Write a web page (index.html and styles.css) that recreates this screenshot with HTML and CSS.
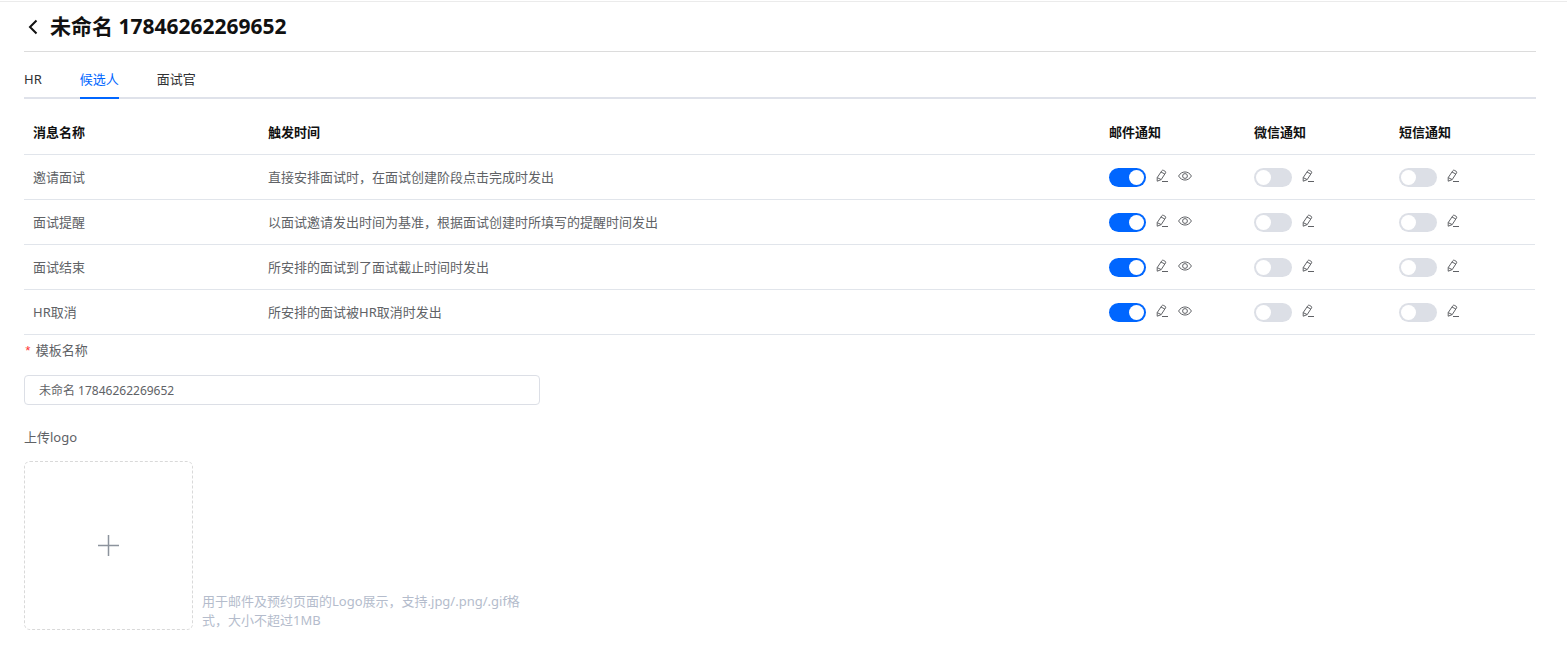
FILE: index.html
```html
<!DOCTYPE html>
<html lang="zh-CN">
<head>
    <meta charset="UTF-8">
    <meta name="viewport" content="width=device-width, initial-scale=1.0">
    <title>消息模板</title>
    <link rel="stylesheet" href="styles.css">
</head>
<body>

<svg class="sprite" aria-hidden="true">
    <symbol id="icon-edit" viewBox="0 0 14 14">
        <path d="M6.8 1.8Q7.4.9 8.3 1.3L10.3 2.4Q11.1 2.9 10.6 3.8L6.2 10.6 2.2 12.2 2.2 8.6z M9.8 5 6 3 M2.2 8.6 6.2 10.6 M7 12.5H13"/>
    </symbol>
    <symbol id="icon-view" viewBox="0 0 14 14">
        <path d="M.6 7C3.6 1.6 10.4 1.6 13.4 7 10.4 12.4 3.6 12.4.6 7z"/>
        <circle cx="7" cy="7" r="2.4"/>
    </symbol>
</svg>

<div class="page">
    <header class="page-header">
        <button type="button" class="back" aria-label="返回">
            <svg viewBox="0 0 10 16"><path d="M8.5 1.5 2 8l6.5 6.5"/></svg>
        </button>
        <h1>未命名 17846262269652</h1>
    </header>

    <nav class="tabs">
        <a href="#hr">HR</a>
        <a href="#candidate" class="active">候选人</a>
        <a href="#interviewer">面试官</a>
    </nav>

    <table class="messages">
        <thead>
            <tr>
                <th class="col-name">消息名称</th>
                <th>触发时间</th>
                <th class="col-notice">邮件通知</th>
                <th class="col-notice">微信通知</th>
                <th class="col-notice">短信通知</th>
            </tr>
        </thead>
        <tbody id="messageRows"></tbody>
    </table>

    <form class="template-form">
        <label class="required" for="templateName">模板名称</label>
        <input type="text" id="templateName" class="text-input" value="未命名 17846262269652">

        <label for="logoButton">上传logo</label>
        <div class="upload">
            <button type="button" id="logoButton" class="upload-box">
                <svg viewBox="0 0 21 21"><path d="M0 10.5H21M10.5 0V21"/></svg>
            </button>
            <p class="upload-tip">用于邮件及预约页面的Logo展示，支持.jpg/.png/.gif格式，大小不超过1MB</p>
        </div>
    </form>
</div>

<script>
    const messages = [
        ["邀请面试", "直接安排面试时，在面试创建阶段点击完成时发出"],
        ["面试提醒", "以面试邀请发出时间为基准，根据面试创建时所填写的提醒时间发出"],
        ["面试结束", "所安排的面试到了面试截止时间时发出"],
        ["HR取消", "所安排的面试被HR取消时发出"]
    ];

    function iconButton(icon, label) {
        return `<button type="button" class="icon-button" aria-label="${label}"><svg><use href="#icon-${icon}"/></svg></button>`;
    }

    function noticeCell(name, channel, on) {
        return `<td><div class="notice">
            <input type="checkbox" class="switch" aria-label="${name} ${channel}"${on ? " checked" : ""}>
            ${iconButton("edit", "编辑")}${on ? iconButton("view", "预览") : ""}
        </div></td>`;
    }

    document.getElementById("messageRows").innerHTML = messages.map(([name, time]) => `<tr>
        <td>${name}</td>
        <td>${time}</td>
        ${noticeCell(name, "邮件通知", true)}
        ${noticeCell(name, "微信通知", false)}
        ${noticeCell(name, "短信通知", false)}
    </tr>`).join("");
</script>

</body>
</html>
```
FILE: styles.css
```css
* {
    box-sizing: border-box;
}

body {
    margin: 0;
    background-color: #ffffff;
    color: #606266;
    font-family: "Noto Sans", "Noto Sans CJK SC", sans-serif;
    font-size: 13px;
    line-height: 20px;
}

input, button {
    font-family: inherit;
    margin: 0;
}

button {
    display: flex;
    align-items: center;
    justify-content: center;
    padding: 0;
    border: none;
    background: none;
    color: inherit;
    cursor: pointer;
}

svg {
    fill: none;
    stroke: currentColor;
}

.sprite {
    display: none;
}

.page {
    margin-top: 1px;
    padding: 0 31px 24px 24px;
    border-top: 1px solid #ebebeb;
}

.page-header {
    display: flex;
    align-items: center;
    gap: 12px;
    height: 50px;
    padding-left: 4px;
    border-bottom: 1px solid #dcdcdc;
    color: #111111;
}

.back svg {
    width: 10px;
    height: 16px;
    stroke-width: 2;
}

h1 {
    margin: 0 0 2px;
    font-size: 21px;
    line-height: 28px;
    font-weight: bold;
}

.tabs {
    display: flex;
    gap: 38px;
    margin-top: 9px;
    border-bottom: 2px solid #dfe2ea;
}

.tabs a {
    height: 38px;
    margin-bottom: -2px;
    line-height: 36px;
    color: #303133;
    text-decoration: none;
}

.tabs .active {
    border-bottom: 2px solid #0066ff;
    color: #0066ff;
}

.messages {
    width: calc(100% - 1px);
    margin-top: 11px;
    border-collapse: separate;
    border-spacing: 0;
    table-layout: fixed;
}

th, td {
    height: 45px;
    padding: 0 9px;
    border-bottom: 1px solid #e1e5eb;
    text-align: left;
}

th {
    color: #111111;
    font-weight: bold;
}

.col-name {
    width: 235px;
}

.col-notice {
    width: 145px;
}

.notice {
    display: flex;
    align-items: center;
}

.switch {
    appearance: none;
    width: 38px;
    height: 19px;
    margin-right: 9px;
    padding: 2px;
    border-radius: 10px;
    background-color: #dcdfe6;
    cursor: pointer;
}

.switch::before {
    content: "";
    display: block;
    width: 15px;
    height: 15px;
    border-radius: 50%;
    background-color: #ffffff;
}

.switch:checked {
    width: 37px;
    background-color: #0066ff;
}

.switch:checked::before {
    margin-left: auto;
}

.icon-button {
    margin: 0 9px 2px 0;
}

.icon-button svg {
    width: 14px;
    height: 14px;
}

.template-form label {
    display: flex;
    gap: 4px;
    margin-top: 5px;
}

.required::before {
    content: "*";
    padding-top: 2px;
    color: #ff3333;
    font-family: "Liberation Mono", monospace;
}

.text-input {
    display: block;
    width: 516px;
    max-width: 100%;
    height: 30px;
    margin: 13px 0 22px;
    padding: 0 14px;
    border: 1px solid #dcdfe6;
    border-radius: 4px;
    color: #606266;
    font-size: 12px;
}

.upload {
    display: flex;
    align-items: flex-end;
    gap: 9px;
    margin-top: 14px;
}

.upload-box {
    flex: none;
    width: 169px;
    height: 169px;
    border: 1px dashed #d9d9d9;
    border-radius: 6px;
    color: #8c939d;
}

.upload-box svg {
    width: 21px;
    height: 21px;
    stroke-width: 1.5;
}

.upload-tip {
    width: 336px;
    margin: 0;
    color: #b4bccc;
    line-height: 19px;
}
```
